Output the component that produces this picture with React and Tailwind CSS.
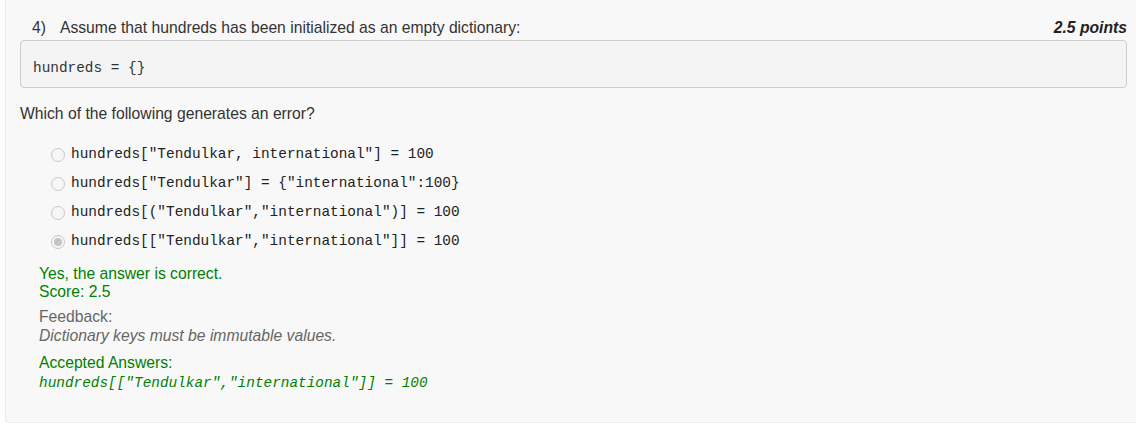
const options = [
  { text: 'hundreds["Tendulkar, international"] = 100', checked: false },
  { text: 'hundreds["Tendulkar"] = {"international":100}', checked: false },
  { text: 'hundreds[("Tendulkar","international")] = 100', checked: false },
  { text: 'hundreds[["Tendulkar","international"]] = 100', checked: true },
];

const sans = "font-['Liberation_Sans',Arial,sans-serif]";
const mono = "font-['Liberation_Mono','DejaVu_Sans_Mono',monospace]";

function Radio({ checked }) {
  return (
    <span className="w-[14px] h-[14px] rounded-full border border-[#c8c8c8] bg-[#f6f6f6] flex items-center justify-center shrink-0">
      {checked && <span className="w-[8px] h-[8px] rounded-full bg-[#c4c4c4]" />}
    </span>
  );
}

export default function App() {
  return (
    <div className={`bg-white min-h-[445px] ${sans}`}>
      <div className="ml-[5px] bg-[#f8f8f8] border-l border-b border-[#ececec] rounded-bl-[4px] pl-[14px] pr-[9px] pt-[18px] pb-[29px] text-[#333] text-[15.7px]">
        {/* Question header */}
        <div className="flex items-center justify-between h-[20px] leading-[20px]">
          <div className="pl-[12px]">
            <span>4)</span>
            <span className="ml-[14px]">Assume that hundreds has been initialized as an empty dictionary:</span>
          </div>
          <div className="font-bold italic text-[#222]">2.5 points</div>
        </div>

        {/* Code block */}
        <div className="mt-[2px] h-[48px] bg-[#f4f4f4] border border-[#cccccc] rounded-[4px] pl-[12px] pt-[14px]">
          <span className={`${mono} text-[14.4px] leading-[20px] text-[#333]`}>hundreds = {"{}"}</span>
        </div>

        <div className="mt-[16px] leading-[20px]">Which of the following generates an error?</div>

        {/* Options */}
        <div className="mt-[16px] pl-[31px]">
          {options.map((o, i) => (
            <div key={i} className="flex items-center h-[29px] gap-[6px]">
              <Radio checked={o.checked} />
              <span className={`${mono} text-[14.4px] text-[#222] whitespace-pre`}>{o.text}</span>
            </div>
          ))}
        </div>

        {/* Result + feedback */}
        <div className="mt-[9px] pl-[19px]">
          <div className="text-[#008000] leading-[18px]">
            <div>Yes, the answer is correct.</div>
            <div>Score: 2.5</div>
          </div>
          <div className="mt-[6px] text-[#666] leading-[19px]">
            <div>Feedback:</div>
            <div className="italic">Dictionary keys must be immutable values.</div>
          </div>
          <div className="mt-[9px] text-[#008000]">
            <div className="leading-[18px]">Accepted Answers:</div>
            <div className={`${mono} italic text-[14.4px] leading-[20px] mt-[1px] whitespace-pre`}>
              hundreds[["Tendulkar","international"]] = 100
            </div>
          </div>
        </div>
      </div>
    </div>
  );
}
